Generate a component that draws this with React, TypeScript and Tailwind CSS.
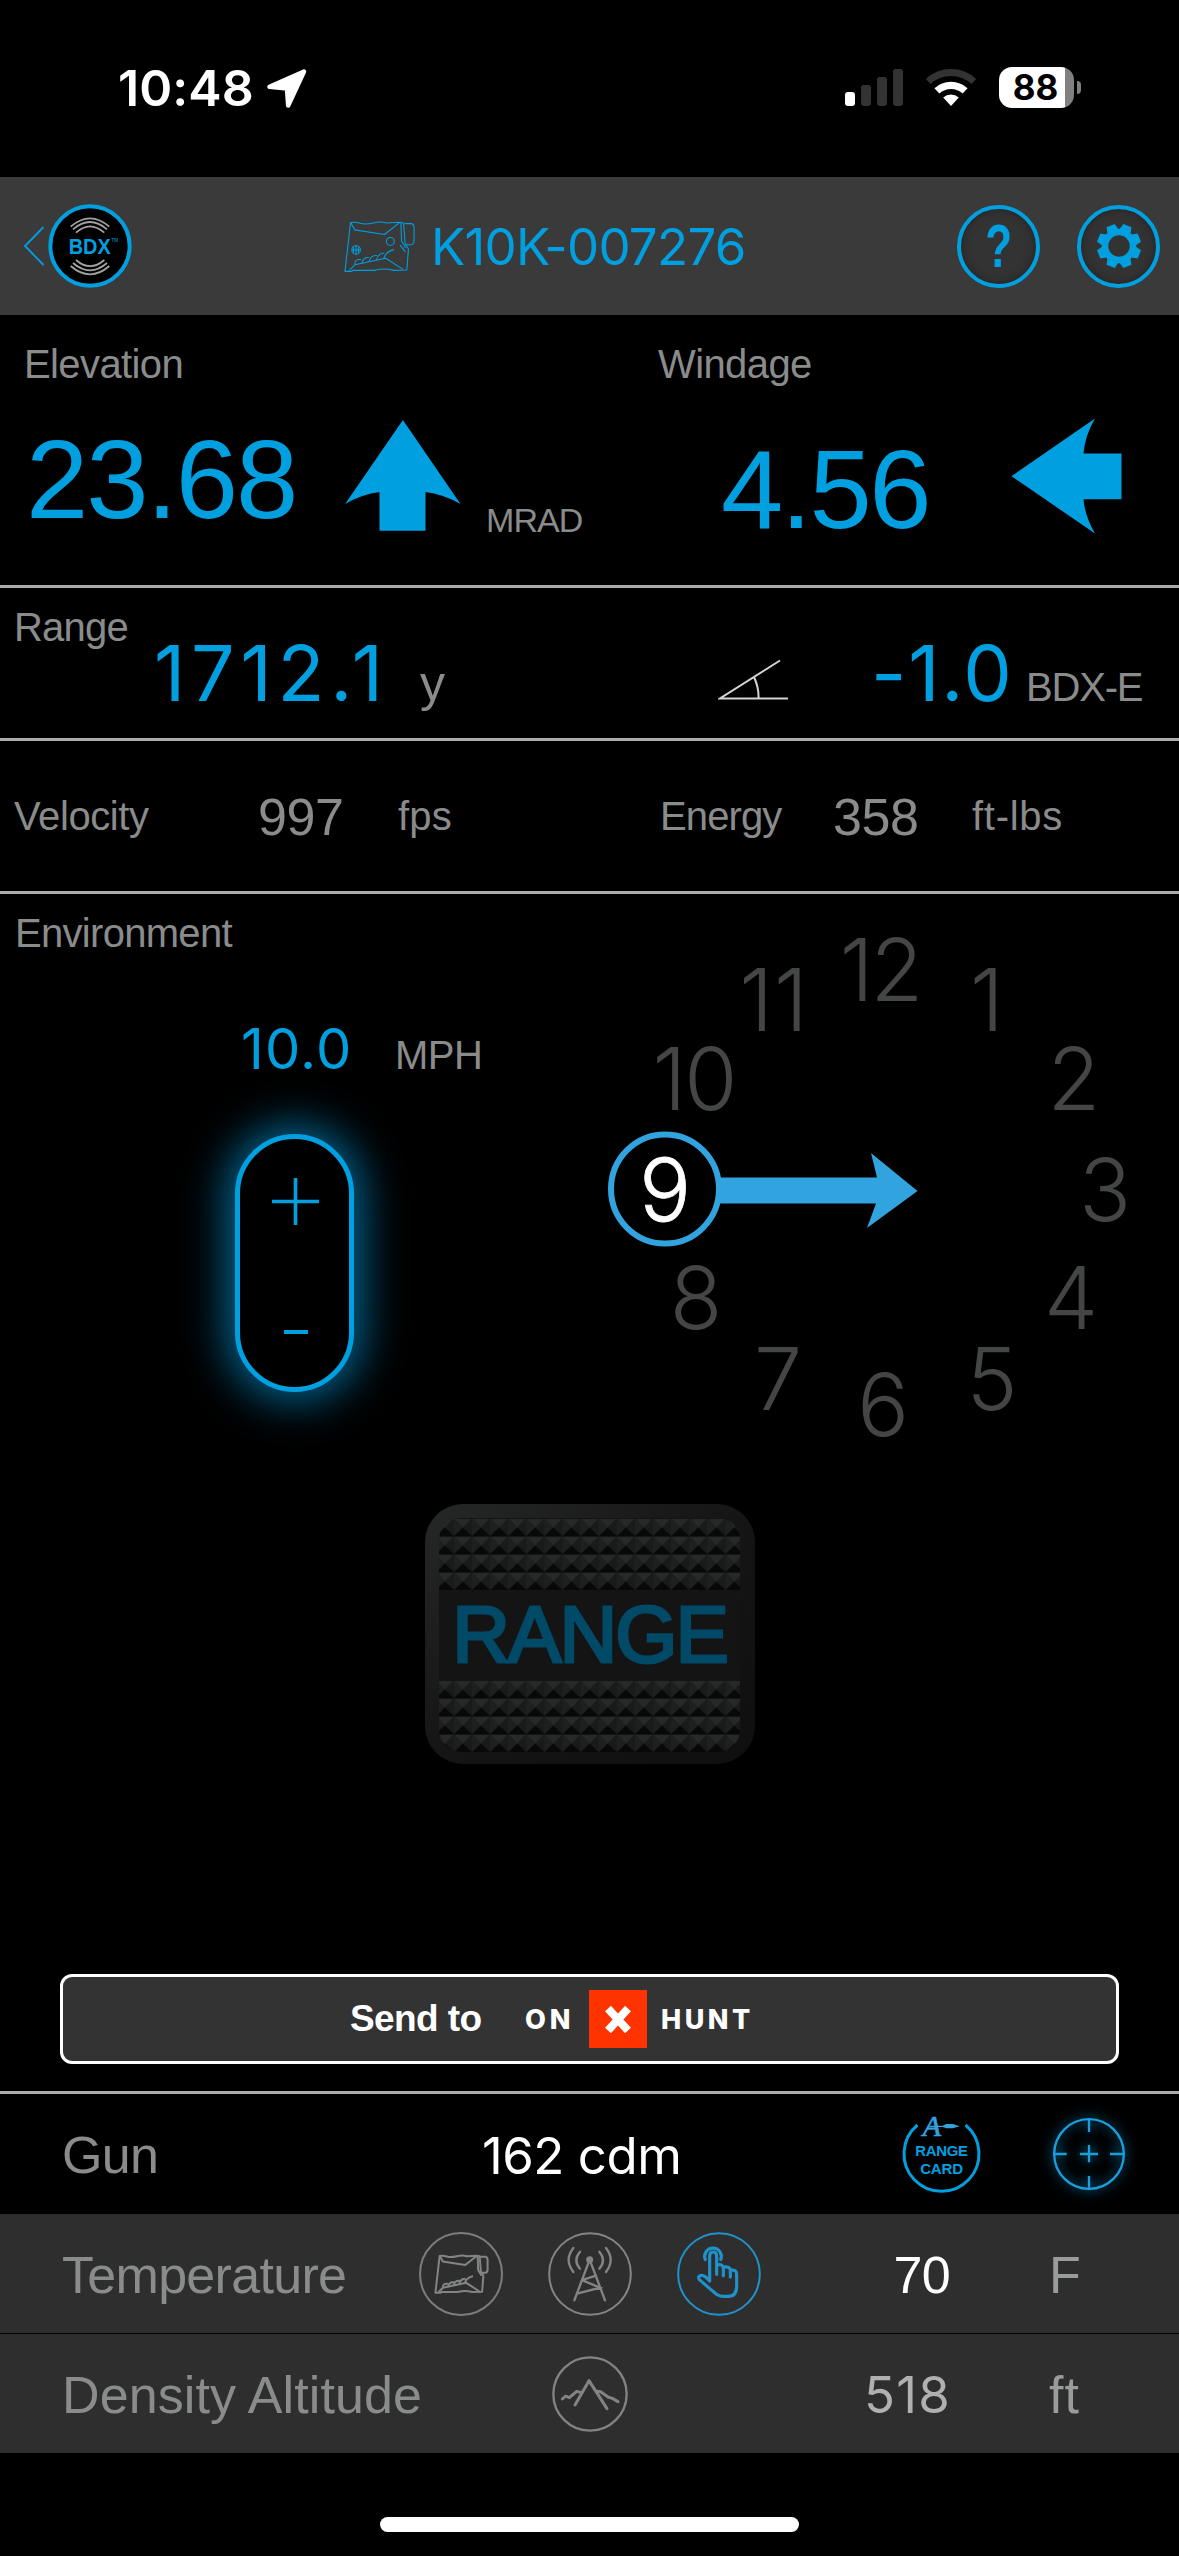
import type { ReactNode } from "react";

type ClockHour = { label: string; x: number; y: number; spacing?: number };

const BLUE = "#00a0e0";

const hours: ClockHour[] = [
  { label: "12", x: 880, y: 1001, spacing: -3 },
  { label: "1", x: 987, y: 1031 },
  { label: "2", x: 1074, y: 1110 },
  { label: "3", x: 1105, y: 1221 },
  { label: "4", x: 1071, y: 1329 },
  { label: "5", x: 992, y: 1410 },
  { label: "6", x: 883, y: 1436 },
  { label: "7", x: 778, y: 1410 },
  { label: "8", x: 696, y: 1329 },
  { label: "10", x: 694, y: 1110, spacing: -2 },
  { label: "11", x: 774, y: 1031, spacing: 1 },
];

const StatusBar = () => (
  <div className="flex h-[177px] items-start justify-between pl-[118px] pr-[98px] pt-[63px]">
    <div className="flex items-start">
      <span className="w-[145px] font-[Inter,sans-serif] text-[50px] font-semibold leading-none tracking-[0.1px] whitespace-nowrap">
        10:48
      </span>
      <svg width="46" height="46" viewBox="262 65 46 46" className="mt-[2px]">
        <path
          d="M303 71.5 L268.5 86.8 L286 88.6 L287.2 105.5 Z"
          fill="white"
          stroke="white"
          strokeWidth="4.5"
          strokeLinejoin="round"
        />
      </svg>
    </div>
    <div className="flex items-start">
      <div className="mt-[6px] flex h-[37px] items-end gap-1.5">
        <div className="h-[14px] w-2.5 rounded-[3px] bg-white" />
        <div className="h-[21px] w-2.5 rounded-[3px] bg-[#333333]" />
        <div className="h-[29px] w-2.5 rounded-[3px] bg-[#333333]" />
        <div className="h-[37px] w-2.5 rounded-[3px] bg-[#333333]" />
      </div>
      <svg width="52" height="38" viewBox="-26 -37 52 38" fill="none" className="mt-[6px] ml-[22px]">
        <path d="M-22.8 -24.5 A33.5 33.5 0 0 1 22.8 -24.5" stroke="#333333" strokeWidth="7" />
        <path d="M-14.1 -15.1 A20.7 20.7 0 0 1 14.1 -15.1" stroke="white" strokeWidth="7.3" />
        <path d="M0 0 L-7.8 -8.5 A11.7 11.7 0 0 1 7.8 -8.5 Z" fill="white" />
      </svg>
      <div className="mt-1 ml-[22px] flex h-[41px] w-[75px] items-center overflow-hidden rounded-[13px] bg-[linear-gradient(to_right,white_88%,#808080_88%)]">
        <span className="w-full pr-0.5 text-center font-[Inter,sans-serif] text-[35px] font-bold leading-none text-black">
          88
        </span>
      </div>
      <div className="mt-[18px] ml-[3px] h-[13px] w-1 rounded-r-full bg-[#808080]" />
    </div>
  </div>
);

const RangefinderIcon = ({ simple = false, className = "" }: { simple?: boolean; className?: string }) => (
  <svg
    viewBox="969 88 220 161"
    fill="none"
    stroke="currentColor"
    strokeWidth={simple ? 8 : 3.2}
    strokeLinejoin="round"
    strokeLinecap="round"
    className={className}
  >
    <path d="M991 96 Q1005 93 1020 98 T1060 97 T1100 97 L1140 95 L1152 97 L1157 160 L1167 176 L1162 240 L1122 241 Q1092 233 1065 241 L998 241 L995 244 L974 244 Z" />
    <path d="M1156 99 H1176 Q1184 101 1184 112 V152 Q1183 163 1175 163 H1159" />
    <path d="M992 97 L1004 118 L1094 132 L1140 96 M1144 98 L1146 152 L1158 172" />
    <path d="M988 240 L1004 224 L1098 204 L1150 238" />
    <path d="M1004 222 Q1004 206 1022 208 M1026 218 Q1030 200 1046 202 M1048 213 Q1052 195 1070 196 M1070 209 Q1074 190 1092 188 M1092 205 Q1098 184 1122 178" />
    {!simple && (
      <>
        <circle cx="1112" cy="153" r="12" />
        <circle cx="1008" cy="179" r="13" />
        <path d="M1008 167 V191 M997 179 H1019 M1000 172 V186 M1015 172 V186 M1142 165 L1157 184" />
      </>
    )}
  </svg>
);

const Header = () => (
  <header className="flex h-[138px] items-center bg-[#3a3a3a] pr-[19px] pl-[23px] text-[#00a0e0]">
    <svg width="22" height="42" viewBox="0 0 22 42" fill="none">
      <path d="M20.5 2 L2 21 L20.5 40" stroke={BLUE} strokeWidth="1.8" />
    </svg>
    <svg width="84" height="84" viewBox="85 42 252 252" fill="none" className="ml-[3px]">
      <circle cx="211" cy="168" r="119" fill="black" stroke={BLUE} strokeWidth="12" />
      <g stroke="#a3a3a3" strokeWidth="5.5">
        <path d="M153 110 Q211 60 269 110 M160 118 Q211 74 262 118 M169 128 Q211 90 254 128" />
        <path d="M153 228 Q211 278 269 228 M160 219 Q211 263 262 219 M169 210 Q211 247 254 210" />
      </g>
      <text
        x="147"
        y="192"
        fill={BLUE}
        fontFamily="Liberation Sans, sans-serif"
        fontWeight="bold"
        fontSize="66"
        textLength="126"
        lengthAdjust="spacingAndGlyphs"
      >
        BDX
      </text>
      <text x="275" y="157" fill={BLUE} fontFamily="Liberation Sans, sans-serif" fontSize="14">
        TM
      </text>
    </svg>
    <RangefinderIcon className="ml-[211px] h-[53px] w-[73px]" />
    <h1 className="ml-[15px] w-[520px] font-[Inter,sans-serif] text-[51px] font-normal leading-none tracking-[-0.7px] whitespace-nowrap">
      K10K-007276
    </h1>
    <div className="flex flex-1 items-center justify-end gap-[37px]">
      <div className="flex h-[83px] w-[83px] items-center justify-center rounded-full border-4 border-[#00a0e0] bg-[#333333] shadow-[inset_0_0_8px_#222222]">
        <span className="text-[61px] font-bold leading-none scale-x-[0.72]">?</span>
      </div>
      <div className="flex h-[83px] w-[83px] items-center justify-center rounded-full border-4 border-[#00a0e0] bg-[#333333] shadow-[inset_0_0_8px_#222222]">
        <svg width="46" height="46" viewBox="-23 -23 46 46">
          <circle r="14" fill="none" stroke={BLUE} strokeWidth="6.5" />
          {[22.5, 67.5, 112.5, 157.5, 202.5, 247.5, 292.5, 337.5].map((angle) => (
            <path
              key={angle}
              d="M-6 -15 L-4.4 -22 H4.4 L6 -15 Z"
              fill={BLUE}
              transform={`rotate(${angle})`}
            />
          ))}
        </svg>
      </div>
    </div>
  </header>
);

const Label = ({ children, className = "tracking-[-0.5px]" }: { children: ReactNode; className?: string }) => (
  <span className={`text-[40px] leading-none whitespace-nowrap ${className}`}>{children}</span>
);

const Solution = () => (
  <section className="grid h-[273px] grid-cols-[634px_1fr] border-b-[3px] border-[#aaaaaa] pt-[29px] pl-[24px]">
    <div>
      <Label className="block tracking-[-0.6px]">Elevation</Label>
      <div className="flex">
        <span className="mt-[40px] w-[318px] pl-[2px] text-[112px] leading-none tracking-[-2px] text-[#00a0e0]">
          23.68
        </span>
        <svg width="116" height="111" viewBox="345.5 420 116 111" className="mt-[36px] ml-[3px]">
          <path
            d="M403.4 420 L461 504 Q443 494 426 492 V530.7 H380 V492 Q363 494 345.6 504 Z"
            fill={BLUE}
          />
        </svg>
        <span className="mt-[119px] ml-[25px] text-[34px] leading-none tracking-[-0.9px]">MRAD</span>
      </div>
    </div>
    <div>
      <Label className="block tracking-[-0.6px]">Windage</Label>
      <div className="flex">
        <span className="mt-[50px] ml-[63px] w-[290px] text-[112px] leading-none tracking-[-2.5px] text-[#00a0e0]">
          4.56
        </span>
        <svg width="111" height="116" viewBox="1011 417.5 111 116" className="mt-[34px]">
          <path
            d="M1011.5 475.7 L1095 418 Q1085 435 1083.5 453 H1121.5 V498.7 H1083.5 Q1085 516 1095 533 Z"
            fill={BLUE}
          />
        </svg>
      </div>
    </div>
  </section>
);

const RangeRow = () => (
  <section className="flex h-[153px] items-start border-b-[3px] border-[#aaaaaa] pl-[14px]">
    <Label className="mt-[19px] w-[140px] tracking-[-0.8px]">Range</Label>
    <div className="mt-[47px] flex items-baseline">
      <span className="w-[266px] font-[Inter,sans-serif] text-[77px] leading-none tracking-[5.8px] text-[#00a0e0]">
        1712.1
      </span>
      <span className="w-[298px] text-[50px] leading-none">y</span>
      <svg width="70" height="44" viewBox="718 655 70 44" fill="none" stroke="#d4d4d4" strokeWidth="2" className="translate-y-[1px]">
        <path d="M780 657.5 L720 695.5 H788 M754 674 Q759 685 758.5 695" />
      </svg>
      <span className="ml-[83px] w-[155px] font-[Inter,sans-serif] text-[77px] leading-none tracking-[1.8px] text-[#00a0e0]">
        -1.0
      </span>
      <Label className="tracking-[-1.2px]">BDX-E</Label>
    </div>
  </section>
);

const VelocityRow = () => (
  <section className="grid h-[153px] grid-cols-[244px_140px_262px_173px_139px_1fr] items-start border-b-[3px] border-[#aaaaaa] pt-[50px] pl-[14px]">
    <Label className="mt-[5px] tracking-[-0.4px]">Velocity</Label>
    <span className="text-[52px] leading-none tracking-[-0.4px]">997</span>
    <Label className="mt-[5px] tracking-[0.2px]">fps</Label>
    <Label className="mt-[5px] tracking-[-0.9px]">Energy</Label>
    <span className="text-[52px] leading-none tracking-[-0.4px]">358</span>
    <Label className="mt-[5px] tracking-[0.7px]">ft-lbs</Label>
  </section>
);

const WindClock = () => (
  <svg width="589" height="600" viewBox="590 894 589 600" fontFamily="Inter, sans-serif" fontSize="86" fontWeight="300" textAnchor="middle">
    {hours.map((h) => (
      <text key={h.label} x={h.x} y={h.y} fill="#444545" letterSpacing={h.spacing ?? 0}>
        {h.label}
      </text>
    ))}
    <ellipse cx="665" cy="1189" rx="54" ry="54.5" fill="black" stroke="#31a4e0" strokeWidth="6" />
    <text x="665" y="1221" fill="white" stroke="white" strokeWidth="0.8">
      9
    </text>
    <path d="M720 1177.5 H877 L871 1153 L917.5 1191 L867 1228 L876 1203.5 H720 Z" fill="#31a4e0" />
  </svg>
);

const Environment = () => (
  <section className="flex h-[610px]">
    <div className="w-[590px]">
      <Label className="mt-[19px] ml-[15px] block tracking-[-0.7px]">Environment</Label>
      <div className="mt-[68px] ml-[241px] flex items-baseline">
        <span className="w-[154px] font-[Inter,sans-serif] text-[56px] leading-none tracking-[1.2px] text-[#00a0e0]">
          10.0
        </span>
        <Label>MPH</Label>
      </div>
      <div className="mt-[57px] ml-[235px] flex h-[258px] w-[119px] flex-col items-center justify-between rounded-full border-[5px] border-[#00a0e0] bg-black pt-[39px] pb-[53px] shadow-[0_0_44px_8px_#006a98]">
        <svg width="47" height="47" viewBox="0 0 47 47" stroke={BLUE} strokeWidth="3.6" className="ml-[2px]">
          <path d="M23.5 0 V47 M0 23.5 H47" />
        </svg>
        <div className="ml-[3px] h-1 w-6 bg-[#00a0e0]" />
      </div>
    </div>
    <WindClock />
  </section>
);

const Grip = ({ id, className }: { id: string; className: string }) => (
  <svg width="301" height="72" className={className}>
    <defs>
      <pattern id={id} width="18.1" height="18" x="-3.2" patternUnits="userSpaceOnUse">
        <rect width="18.1" height="18" fill="#191a1a" />
        <path d="M0 0 H18.1 L9 9.5 Z" fill="#272828" />
        <path d="M0 0 L9 9.5 L0 18 Z" fill="#1e1f1f" />
        <path d="M0 18 L9 9.5 L18.1 18 Z" fill="#080808" />
        <path d="M0 0.5 H18.1" stroke="#141414" />
      </pattern>
    </defs>
    <rect width="301" height="72" fill={`url(#${id})`} />
  </svg>
);

const RangeButton = () => (
  <button
    type="button"
    className="mx-auto flex h-[260px] w-[330px] flex-col items-center rounded-[38px] bg-linear-to-br from-[#262727] via-[#151515] to-[#0f0f0f] pt-[14px]"
  >
    <Grip id="grip-top" className="rounded-t-[22px]" />
    <span className="flex h-[90px] w-[301px] items-center justify-center bg-[#141414] pb-px text-[80px] leading-none tracking-[-2px] text-[#004a68] [-webkit-text-stroke:3px_#004a68]">
      RANGE
    </span>
    <Grip id="grip-bottom" className="rounded-b-[22px]" />
  </button>
);

const SendButton = () => (
  <button
    type="button"
    className="mt-[210px] ml-[60px] flex h-[90px] w-[1059px] items-center rounded-[12px] border-[3px] border-white bg-[#333333] pl-[287px] text-white"
  >
    <span className="w-[175px] pb-[2px] text-left text-[37px] font-bold leading-none tracking-[-0.6px]">Send to</span>
    <span className="w-[64px] text-left font-[Inter,sans-serif] text-[27px] font-extrabold leading-none tracking-[4px]">
      ON
    </span>
    <span className="flex h-[58px] w-[58px] items-center justify-center bg-[#ff3300]">
      <svg width="26" height="27" viewBox="0 0 26 27" stroke="white" strokeWidth="8">
        <path d="M3 2.5 L23 24.5 M23 2.5 L3 24.5" />
      </svg>
    </span>
    <span className="ml-[14px] font-[Inter,sans-serif] text-[27px] font-extrabold leading-none tracking-[3.5px]">
      HUNT
    </span>
  </button>
);

const RangeCardIcon = () => (
  <svg width="83" height="83" viewBox="361.5 68 249 249" className="ml-[1px] overflow-visible">
    <path d="M414 104 A112.5 112.5 0 1 0 558 104" fill="none" stroke={BLUE} strokeWidth="9" />
    <text x="430" y="138" fill="#31a4e0" stroke="#31a4e0" strokeWidth="2" fontFamily="Liberation Serif, serif" fontStyle="italic" fontSize="90">
      A
    </text>
    <path d="M450 106 H490 L500 101 H520 L540 107.5 L520 114 H500 L490 110 H450 Z" fill="#31a4e0" />
    <g fill={BLUE} fontFamily="Liberation Sans, sans-serif" fontWeight="bold" fontSize="46" textAnchor="middle">
      <text x="486" y="198" textLength="158" lengthAdjust="spacingAndGlyphs">
        RANGE
      </text>
      <text x="486" y="252" textLength="128" lengthAdjust="spacingAndGlyphs">
        CARD
      </text>
    </g>
  </svg>
);

const ReticleIcon = () => (
  <svg
    width="84"
    height="84"
    viewBox="801 66 252 252"
    fill="none"
    stroke="#1b9fdc"
    strokeWidth="7"
    className="overflow-visible drop-shadow-[0_0_6px_#0099dd]"
  >
    <circle cx="927" cy="192" r="104.5" />
    <path d="M927 88 V126 M927 258 V296 M822 192 H860 M990 192 H1032 M927 165 V217 M900 192 H954" />
  </svg>
);

const TowerIcon = () => (
  <svg width="84" height="84" viewBox="504 425 252 252" fill="none" stroke="#838585" strokeWidth="7" strokeLinecap="round">
    <circle cx="630" cy="551" r="122.5" strokeWidth="6" />
    <circle cx="629" cy="508" r="7" fill="#838585" />
    <path d="M629 508 L583 630 M629 508 L675 630 M610 568 L648 556 M608 570 L660 592 L594 609" />
    <path d="M600 484 Q578 510 600 535 M580 473 Q552 508 580 545" />
    <path d="M658 484 Q680 510 658 535 M678 473 Q706 508 678 545" />
  </svg>
);

const TapIcon = () => (
  <svg
    width="84"
    height="84"
    viewBox="891 425 252 252"
    fill="none"
    stroke="#2191cb"
    strokeWidth="9.5"
    strokeLinecap="round"
    strokeLinejoin="round"
  >
    <circle cx="1017" cy="551" r="122.5" strokeWidth="6" />
    <path d="M989 572 V497 Q989 485 999 485 Q1010 485 1010 497 V552 M1010 524 Q1030 520 1030 534 V556 M1030 530 Q1051 527 1051 541 V560 M1051 540 Q1070 536 1070 552 V588 Q1069 618 1045 618 H1029 Q1014 618 1000 604 L958 568 Q952 557 964 555 Q974 554 989 572" />
    <path d="M976 508 A25 25 0 1 1 1022 508" />
  </svg>
);

const MountainIcon = () => (
  <svg
    width="76"
    height="76"
    viewBox="516 797 228 228"
    fill="none"
    stroke="#838383"
    strokeWidth="9"
    strokeLinecap="round"
    strokeLinejoin="round"
  >
    <circle cx="630" cy="911" r="110" strokeWidth="7" />
    <path d="M585 944 L627 871 L681 955 M547 926 L557 917 L568 922 L590 903 L602 906 M648 902 L662 904 L684 920 L697 924 L714 934" />
  </svg>
);

const Details = () => (
  <section className="text-[52px] leading-none tracking-[-0.7px]">
    <div className="flex h-[120px] items-center pl-[62px]">
      <span className="w-[420px] pt-0.5">Gun</span>
      <span className="w-[417px] pt-0.5 font-[Inter,sans-serif] text-[51px] tracking-[-0.5px] text-white">162 cdm</span>
      <RangeCardIcon />
      <div className="ml-[64px]">
        <ReticleIcon />
      </div>
    </div>
    <div className="flex h-[120px] items-center border-b border-black bg-[#2e2e2e] pl-[62px]">
      <span className="w-[357px] pt-0.5">Temperature</span>
      <div className="flex w-[438px] items-center gap-[45px]">
        <div className="flex h-[84px] w-[84px] items-center justify-center rounded-full border-2 border-[#7b7d7d]">
          <RangefinderIcon simple className="h-[40px] w-[55px] text-[#838585]" />
        </div>
        <TowerIcon />
        <TapIcon />
      </div>
      <span className="w-[93px] pt-0.5 text-right text-white">70</span>
      <span className="ml-[99px] pt-0.5 text-[#9a9c9c]">F</span>
    </div>
    <div className="flex h-[119px] items-center bg-[#2e2e2e] pl-[62px]">
      <span className="w-[490px] pt-0.5 tracking-[0.1px]">Density Altitude</span>
      <MountainIcon />
      <span className="w-[323px] pt-0.5 text-right font-[Inter,sans-serif] text-[51px] tracking-[1.2px] text-[#b0b0b0]">518</span>
      <span className="ml-[98px] pt-0.5 tracking-[1px] text-[#9a9c9c]">ft</span>
    </div>
  </section>
);

const App = () => {
  return (
    <div className="h-[2556px] w-[1179px] overflow-hidden bg-black font-['Liberation_Sans',Arial,sans-serif] text-[#8a8c8c]">
      <div className="text-white">
        <StatusBar />
      </div>
      <Header />
      <Solution />
      <RangeRow />
      <VelocityRow />
      <Environment />
      <RangeButton />
      <SendButton />
      <div className="mt-[27px] h-[3px] bg-[#aaaaaa]" />
      <Details />
      <div className="mx-auto mt-[64px] h-[15px] w-[419px] rounded-full bg-white" />
    </div>
  );
};

export default App;
